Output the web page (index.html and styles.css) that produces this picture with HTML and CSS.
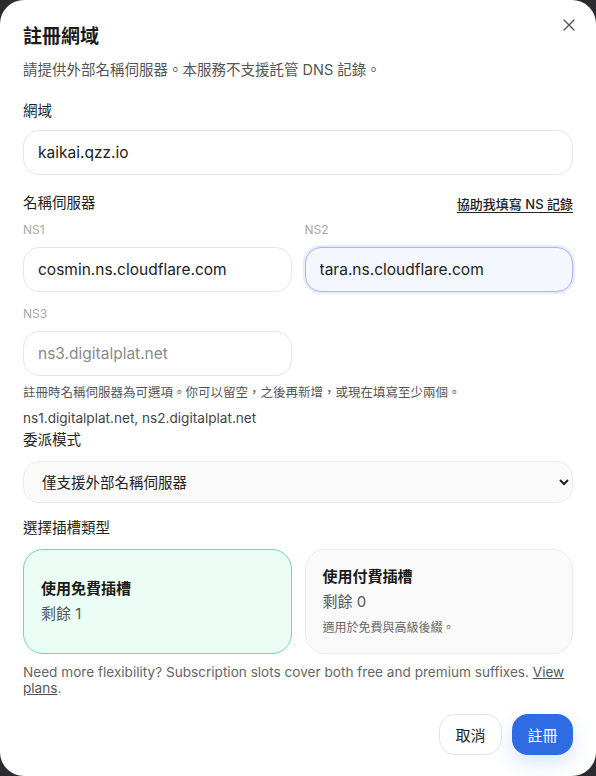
FILE: index.html
```html
<!DOCTYPE html>
<html lang="zh-Hant">
<head>
  <meta charset="UTF-8">
  <title>註冊網域</title>
  <link rel="stylesheet" href="styles.css">
</head>
<body>
  <div class="modal">
    <button class="close-btn" type="button" aria-label="關閉">
      <svg width="12" height="12" viewBox="0 0 12 12"><path d="M1 1L11 11M11 1L1 11" stroke="#555" stroke-width="1.4" stroke-linecap="round"/></svg>
    </button>

    <h1 class="title">註冊網域</h1>
    <p class="subtitle">請提供外部名稱伺服器。本服務不支援託管 DNS 記錄。</p>

    <form id="registerForm">
      <label class="field-label first" for="domain">網域</label>
      <input class="text-input" type="text" id="domain" value="kaikai.qzz.io">

      <div class="row-head">
        <span class="field-label">名稱伺服器</span>
        <a href="#" class="help-link">協助我填寫 NS 記錄</a>
      </div>

      <div class="ns-grid">
        <div class="ns-item">
          <label class="ns-label" for="ns1">NS1</label>
          <input class="text-input" type="text" id="ns1" value="cosmin.ns.cloudflare.com">
        </div>
        <div class="ns-item">
          <label class="ns-label" for="ns2">NS2</label>
          <input class="text-input focused" type="text" id="ns2" value="tara.ns.cloudflare.com">
        </div>
        <div class="ns-item">
          <label class="ns-label" for="ns3">NS3</label>
          <input class="text-input" type="text" id="ns3" placeholder="ns3.digitalplat.net">
        </div>
      </div>

      <p class="hint">註冊時名稱伺服器為可選項。你可以留空，之後再新增，或現在填寫至少兩個。</p>
      <p class="ns-default">ns1.digitalplat.net, ns2.digitalplat.net</p>

      <label class="field-label mode" for="mode">委派模式</label>
      <select id="mode" class="select-input">
        <option>僅支援外部名稱伺服器</option>
      </select>

      <span class="field-label slot">選擇插槽類型</span>
      <div class="slot-grid">
        <div class="slot-card active">
          <div class="slot-title">使用免費插槽</div>
          <div class="slot-count">剩餘 1</div>
        </div>
        <div class="slot-card">
          <div class="slot-title">使用付費插槽</div>
          <div class="slot-count">剩餘 0</div>
          <div class="slot-note">適用於免費與高級後綴。</div>
        </div>
      </div>

      <p class="footnote">Need more flexibility? Subscription slots cover both free and premium suffixes. <a href="#">View plans</a>.</p>

      <div class="actions">
        <button type="button" class="btn btn-cancel">取消</button>
        <button type="submit" class="btn btn-primary">註冊</button>
      </div>
    </form>
  </div>
</body>
</html>
```

FILE: styles.css
```css
body {
  margin: 0;
  background-color: #2b2b30;
  font-family: Inter, "Noto Sans CJK TC", sans-serif;
  color: #222;
}

.modal {
  position: relative;
  box-sizing: border-box;
  width: 596px;
  height: 776px;
  background-color: #fff;
  border-radius: 24px;
  padding: 22px 23px 0 23px;
}

.close-btn {
  position: absolute;
  top: 18px;
  right: 20px;
  width: 14px;
  height: 14px;
  padding: 0;
  border: none;
  background: none;
  display: flex;
  align-items: center;
  justify-content: center;
}

.title {
  margin: 0;
  font-size: 19px;
  line-height: 30px;
  font-weight: 700;
  color: #1a1a1a;
}

.subtitle {
  margin: 7px 0 0;
  font-size: 14.5px;
  line-height: 22px;
  color: #555;
}

form {
  display: flex;
  flex-direction: column;
}

.field-label {
  display: block;
  font-size: 14.5px;
  line-height: 22px;
  color: #222;
}

.field-label.first {
  margin-top: 19px;
  margin-bottom: 8px;
}

.text-input {
  box-sizing: border-box;
  width: 100%;
  height: 45px;
  padding: 0 14px;
  border: 1px solid #e6e6e8;
  border-radius: 16px;
  background-color: #fff;
  font-family: Inter, "Noto Sans CJK TC", sans-serif;
  font-size: 15.5px;
  color: #222;
  outline: none;
}

.text-input::placeholder {
  color: #8a8a8a;
}

.text-input.focused {
  border-color: #a9b8f0;
  background-color: #f5f7ff;
  box-shadow: 0 0 0 2px rgba(120, 145, 235, 0.18);
}

.row-head {
  margin-top: 17px;
  display: flex;
  justify-content: space-between;
  align-items: center;
}

.help-link {
  font-size: 13px;
  font-weight: 500;
  color: #222;
  text-decoration: underline;
  text-underline-offset: 3px;
}

.ns-grid {
  margin-top: 7px;
  display: grid;
  grid-template-columns: 1fr 1fr;
  column-gap: 13px;
  row-gap: 13px;
}

.ns-label {
  display: block;
  font-size: 12px;
  line-height: 18px;
  color: #a8a8a8;
  margin-bottom: 8px;
}

.hint {
  margin: 8px 0 0;
  font-size: 12.5px;
  line-height: 18px;
  color: #555;
}

.ns-default {
  margin: 7px 0 0;
  font-size: 13.6px;
  line-height: 18px;
  color: #444;
}

.field-label.mode {
  margin-top: 2px;
  margin-bottom: 10px;
}

.select-input {
  box-sizing: border-box;
  width: 100%;
  height: 42px;
  padding: 0 10px 0 14px;
  border: 1px solid #ebebed;
  border-radius: 16px;
  background-color: #fafafa;
  font-family: Inter, "Noto Sans CJK TC", sans-serif;
  font-size: 14.5px;
  color: #222;
}

.field-label.slot {
  margin-top: 14px;
}

.slot-grid {
  margin-top: 10px;
  display: grid;
  grid-template-columns: 1fr 1fr;
  column-gap: 13px;
}

.slot-card {
  box-sizing: border-box;
  height: 105px;
  padding: 0 17px;
  border: 1px solid #ececee;
  border-radius: 20px;
  background-color: #fafafb;
  display: flex;
  flex-direction: column;
  justify-content: center;
}

.slot-card.active {
  border-color: #6fd9ad;
  background-color: #ecfdf5;
}

.slot-title {
  font-size: 15px;
  line-height: 22px;
  font-weight: 700;
  color: #1a1a1a;
}

.slot-count {
  margin-top: 3px;
  font-size: 15px;
  line-height: 22px;
  color: #555;
}

.slot-note {
  margin-top: 6px;
  font-size: 12px;
  line-height: 18px;
  color: #666;
}

.footnote {
  margin: 10px 0 0;
  font-size: 13.6px;
  line-height: 16px;
  color: #666;
}

.footnote a {
  color: #555;
  text-decoration: underline;
}

.actions {
  margin-top: 18px;
  display: flex;
  justify-content: flex-end;
  gap: 10px;
}

.btn {
  height: 41px;
  border-radius: 16px;
  font-family: Inter, "Noto Sans CJK TC", sans-serif;
  font-size: 15px;
  cursor: pointer;
}

.btn-cancel {
  width: 63px;
  border: 1px solid #e4e4e6;
  background-color: #fff;
  color: #222;
}

.btn-primary {
  width: 61px;
  border: none;
  background-color: #2f6be2;
  color: #fff;
  box-shadow: 0 8px 20px rgba(47, 107, 226, 0.18);
}
```
